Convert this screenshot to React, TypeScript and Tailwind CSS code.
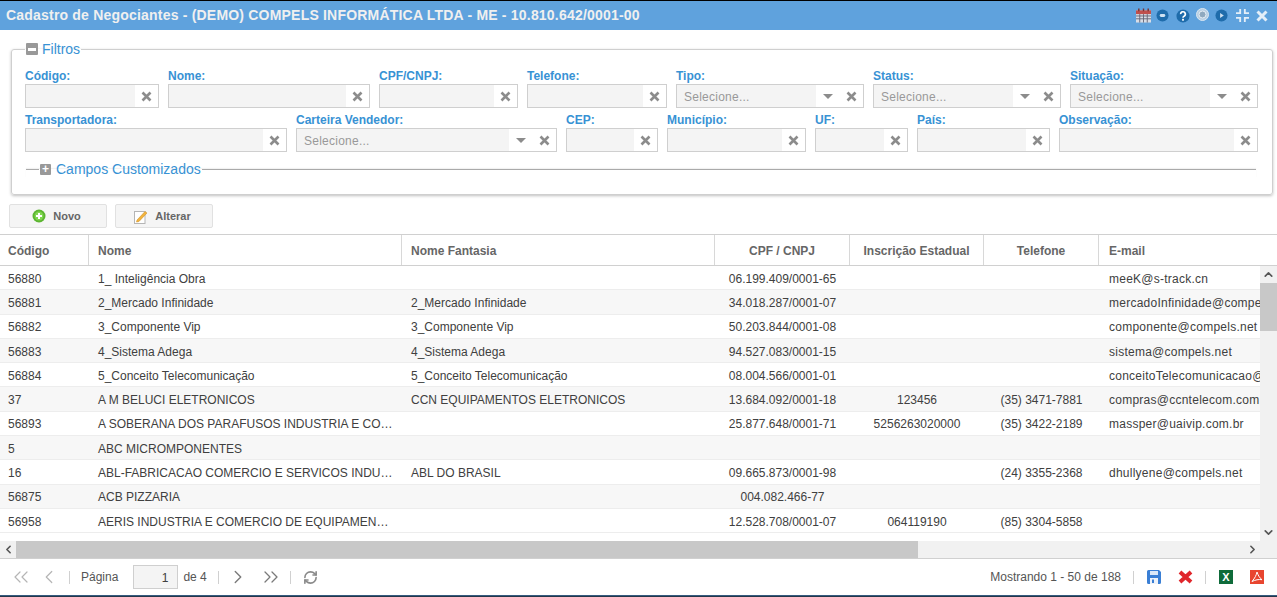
import { ChevronDown, ChevronLeft, ChevronRight, ChevronUp, ChevronsLeft, ChevronsRight, RefreshCw } from "lucide-react";

const rows = [
  ["56880", "1_ Inteligência Obra", "", "06.199.409/0001-65", "", "", "meeK@s-track.cn"],
  ["56881", "2_Mercado Infinidade", "2_Mercado Infinidade", "34.018.287/0001-07", "", "", "mercadoInfinidade@compels.net"],
  ["56882", "3_Componente Vip", "3_Componente Vip", "50.203.844/0001-08", "", "", "componente@compels.net"],
  ["56883", "4_Sistema Adega", "4_Sistema Adega", "94.527.083/0001-15", "", "", "sistema@compels.net"],
  ["56884", "5_Conceito Telecomunicação", "5_Conceito Telecomunicação", "08.004.566/0001-01", "", "", "conceitoTelecomunicacao@compels.net"],
  ["37", "A M BELUCI ELETRONICOS", "CCN EQUIPAMENTOS ELETRONICOS", "13.684.092/0001-18", "123456", "(35) 3471-7881", "compras@ccntelecom.com.br"],
  ["56893", "A SOBERANA DOS PARAFUSOS INDUSTRIA E COMERCIO LTDA", "", "25.877.648/0001-71", "5256263020000", "(35) 3422-2189", "massper@uaivip.com.br"],
  ["5", "ABC MICROMPONENTES", "", "", "", "", ""],
  ["16", "ABL-FABRICACAO COMERCIO E SERVICOS INDUSTRIAIS LTDA", "ABL DO BRASIL", "09.665.873/0001-98", "", "(24) 3355-2368", "dhullyene@compels.net"],
  ["56875", "ACB PIZZARIA", "", "004.082.466-77", "", "", ""],
  ["56958", "AERIS INDUSTRIA E COMERCIO DE EQUIPAMENTOS LTDA", "", "12.528.708/0001-07", "064119190", "(85) 3304-5858", ""],
];

const XIcon = () => (
  <svg width="11" height="11" viewBox="0 0 11 11" className="text-[#8c8c8c]">
    <path d="M1.5 1.5l8 8M9.5 1.5l-8 8" stroke="currentColor" strokeWidth="2.6" />
  </svg>
);

type FieldProps = { label: string; w: string; select?: boolean };

const Field = ({ label, w, select }: FieldProps) => (
  <div className={`${w} shrink-0`}>
    <div className="h-[16px] text-[12px] leading-[14px] font-bold text-[#3892d4]">{label}</div>
    <div className="mt-[-1px] flex h-[24px] border border-[#cfcfcf] bg-white">
      <div className="flex-1 bg-[#f4f4f4] pl-[7px] text-[12px] leading-[24px] tracking-[0.25px] text-[#999]">
        {select ? "Selecione..." : ""}
      </div>
      {select && (
        <div className="flex w-[24px] items-center justify-center">
          <div className="h-0 w-0 border-x-[5px] border-t-[5px] border-x-transparent border-t-[#8c8c8c]" />
        </div>
      )}
      <div className="flex w-[23px] items-center justify-center">
        <XIcon />
      </div>
    </div>
  </div>
);

const ToolButton = ({ label, icon }: { label: string; icon: React.ReactNode }) => (
  <button className="flex h-[24px] w-[98px] items-center justify-center gap-[7px] rounded-[2px] border border-[#e1e1e1] bg-[#f5f5f5] pr-[3px] text-[11px] font-bold text-[#666]">
    {icon}
    {label}
  </button>
);

const headCols = [
  { label: "Código", w: "w-[89px]", cls: "pl-[8px]" },
  { label: "Nome", w: "w-[313px]", cls: "pl-[9px]" },
  { label: "Nome Fantasia", w: "w-[313px]", cls: "pl-[9px]" },
  { label: "CPF / CNPJ", w: "w-[135px]", cls: "justify-center" },
  { label: "Inscrição Estadual", w: "w-[134px]", cls: "justify-center" },
  { label: "Telefone", w: "w-[115px]", cls: "justify-center" },
  { label: "E-mail", w: "flex-1", cls: "pl-[10px]" },
];

const Sep = () => <div className="h-[13px] w-px bg-[#d0d0d0]" />;

const App = () => {
  return (
    <div className="flex h-[597px] w-[1277px] flex-col overflow-hidden border-t border-black bg-white font-['Liberation_Sans',sans-serif] text-[12px] text-[#404040]">
      <div className="flex h-[29px] shrink-0 items-center justify-between bg-[#5fa2dd] pl-[6px] pr-[9px]">
        <div className="text-[14px] font-bold tracking-[0.2px] text-[#f0f0f0]">
          Cadastro de Negociantes - (DEMO) COMPELS INFORMÁTICA LTDA - ME - 10.810.642/0001-00
        </div>
        <div className="flex items-center">
          <svg width="15" height="15" viewBox="0 0 16 15">
            <rect y="2" width="16" height="13" fill="#d8dde6" />
            <rect y="2" width="16" height="4" fill="#c0504d" />
            <path d="M3 0v3M8 0v3M13 0v3" stroke="#7a3030" strokeWidth="1.5" />
            <path d="M0 8h16M0 11h16M4 6v9M8 6v9M12 6v9" stroke="#667" strokeWidth="1" />
          </svg>
          <svg width="13" height="13" viewBox="0 0 14 14" className="ml-[5px]">
            <circle cx="7" cy="7" r="6.5" fill="#1f6cab" />
            <rect x="4" y="5.5" width="6" height="3" rx="1.5" fill="#cfe2f2" />
          </svg>
          <svg width="14" height="14" viewBox="0 0 15 15" className="ml-[7px]">
            <circle cx="7.5" cy="7.5" r="7" fill="#1f6cab" />
            <path d="M5 5.5a2.5 2.5 0 1 1 3.6 2.2c-.8.4-1.1.8-1.1 1.6" fill="none" stroke="#fff" strokeWidth="1.8" />
            <rect x="6.5" y="10.5" width="2" height="2" fill="#fff" />
          </svg>
          <svg width="13" height="13" viewBox="0 0 13 13" className="mb-[2px] ml-[6px]">
            <circle cx="6.5" cy="6.5" r="6" fill="#b9cfe2" stroke="#dbe7f1" />
            <circle cx="6.5" cy="6.5" r="3.5" fill="#8fa9bf" stroke="#e6eef5" />
          </svg>
          <svg width="13" height="13" viewBox="0 0 14 14" className="ml-[6px]">
            <circle cx="7" cy="7" r="6.5" fill="#1f6cab" />
            <path d="M5.5 4.2l4 2.8-4 2.8z" fill="#cfe2f2" />
          </svg>
          <svg width="13" height="13" viewBox="0 0 14 14" className="ml-[8px] text-[#e4eef8]">
            <path d="M4.5 0v4.500H0M9.500 0v4.500H14M4.500 14V9.500H0M9.500 14V9.500H14" fill="none" stroke="currentColor" strokeWidth="2" />
          </svg>
          <svg width="12" height="12" viewBox="0 0 12 12" className="ml-[7px] text-[#e4eef8]">
            <path d="M1.5 1.5l9 9M10.5 1.5l-9 9" stroke="currentColor" strokeWidth="3" />
          </svg>
        </div>
      </div>

      <div className="shrink-0 px-[11px] pt-[9px]">
        <fieldset className="h-[156px] w-[1262px] rounded-[3px] border border-[#cfcfcf] px-[13px] pb-0 shadow-[0_1px_3px_rgba(0,0,0,0.25)]">
          <legend className="flex h-[20px] items-center gap-[4px] px-[1px] text-[14px] text-[#3892d4]">
            <span className="flex h-[12px] w-[12px] items-center justify-center rounded-[1px] bg-[#999]">
              <span className="h-[3px] w-[8px] bg-white" />
            </span>
            Filtros
          </legend>
          <div className="mt-[10px] flex gap-[9px]">
            <Field label="Código:" w="w-[134px]" />
            <Field label="Nome:" w="w-[202px]" />
            <Field label="CPF/CNPJ:" w="w-[139px]" />
            <Field label="Telefone:" w="w-[140px]" />
            <Field label="Tipo:" w="w-[188px]" select />
            <Field label="Status:" w="w-[188px]" select />
            <Field label="Situação:" w="w-[188px]" select />
          </div>
          <div className="mt-[5px] flex gap-[9px]">
            <Field label="Transportadora:" w="w-[262px]" />
            <Field label="Carteira Vendedor:" w="w-[261px]" select />
            <Field label="CEP:" w="w-[92px]" />
            <Field label="Município:" w="w-[139px]" />
            <Field label="UF:" w="w-[93px]" />
            <Field label="País:" w="w-[133px]" />
            <Field label="Observação:" w="w-[199px]" />
          </div>
          <fieldset className="ml-[1px] mr-[3px] mt-[8px] h-[14px] border-t border-[#aaa] shadow-[0_-1px_1px_rgba(0,0,0,0.05)]">
            <legend className="ml-[13px] flex h-[18px] items-center gap-[5px] px-px text-[14px] text-[#3892d4]">
              <span className="flex h-[11px] w-[11px] items-center justify-center rounded-[1px] bg-[#999] text-[12px] font-bold leading-none text-white">
                +
              </span>
              Campos Customizados
            </legend>
          </fieldset>
        </fieldset>
      </div>

      <div className="flex shrink-0 gap-[8px] pl-[9px] pt-[9px]">
        <ToolButton
          label="Novo"
          icon={
            <svg width="14" height="14" viewBox="0 0 14 14">
              <circle cx="7" cy="7" r="6.5" fill="#5cb531" />
              <circle cx="7" cy="7" r="4.5" fill="#7fd64e" />
              <path d="M7 4v6M4 7h6" stroke="#fff" strokeWidth="2" />
            </svg>
          }
        />
        <ToolButton
          label="Alterar"
          icon={
            <svg width="14" height="15" viewBox="0 0 14 15">
              <rect x="0.5" y="2.500" width="10.500" height="12" fill="#fff" stroke="#b5b5b5" />
              <path d="M3 11l8-8.500 2 1.500-8 8.500-2.500.5z" fill="#f2b33d" stroke="#c98a1e" strokeWidth="0.5" />
            </svg>
          }
        />
      </div>

      <div className="mt-[6px] flex h-[32px] shrink-0 border-y border-[#d0d0d0] text-[12px] font-bold text-[#666]">
        {headCols.map((c, i) => (
          <div key={c.label} className={`flex items-center pt-[2px] ${c.w} ${c.cls} ${i < 6 ? "border-r border-[#d8d8d8]" : ""}`}>
            {c.label}
          </div>
        ))}
      </div>

      <div className="flex min-h-0 flex-1">
        <div className="min-w-0 flex-1 overflow-hidden">
          {rows.map((r, i) => (
            <div
              key={r[0]}
              className={`flex h-[24.3px] w-[1500px] items-center border-b border-[#ededed] pt-[2px] ${i % 2 === 1 ? "bg-[#f7f7f7]" : "bg-white"}`}
            >
              <div className="w-[89px] shrink-0 pl-[8px]">{r[0]}</div>
              <div className="w-[313px] shrink-0 truncate pl-[9px] pr-[7px]">{r[1]}</div>
              <div className="w-[313px] shrink-0 truncate pl-[9px] pr-[7px]">{r[2]}</div>
              <div className="w-[135px] shrink-0 text-center">{r[3]}</div>
              <div className="w-[134px] shrink-0 text-center">{r[4]}</div>
              <div className="w-[115px] shrink-0 text-center">{r[5]}</div>
              <div className="flex-1 pl-[10px] tracking-[0.25px]">{r[6]}</div>
            </div>
          ))}
        </div>
        <div className="flex w-[17px] shrink-0 flex-col bg-[#f1f1f1] text-[#555]">
          <div className="flex h-[17px] items-center justify-center">
            <ChevronUp size={13} strokeWidth={3} />
          </div>
          <div className="h-[48px] bg-[#c8c8c8]" />
          <div className="mt-auto flex h-[17px] items-center justify-center">
            <ChevronDown size={13} strokeWidth={3} />
          </div>
        </div>
      </div>

      <div className="flex h-[17px] shrink-0 items-center bg-[#f1f1f1] text-[#555]">
        <div className="flex w-[16px] items-center justify-center">
          <ChevronLeft size={13} strokeWidth={3} />
        </div>
        <div className="h-full w-[902px] bg-[#c8c8c8]" />
        <div className="ml-auto flex w-[50px] items-center justify-center">
          <ChevronRight size={13} strokeWidth={3} />
        </div>
      </div>

      <div className="flex h-[37px] shrink-0 items-center border-t border-[#d0d0d0] pl-[9px] pr-[13px] text-[12px] text-[#555]">
        <ChevronsLeft size={24} strokeWidth={1.2} className="text-[#b5b5b5]" />
        <ChevronLeft size={22} strokeWidth={1.3} className="ml-[5px] text-[#b5b5b5]" />
        <div className="ml-[9px]"><Sep /></div>
        <span className="ml-[11px]">Página</span>
        <div className="ml-[15px] h-[24px] w-[45px] border border-[#cfcfcf] bg-[#f4f4f4] pr-[9px] text-right leading-[24px] text-[#404040]">1</div>
        <span className="ml-[5px]">de 4</span>
        <div className="ml-[11px]"><Sep /></div>
        <ChevronRight size={22} strokeWidth={1.5} className="ml-[8px] text-[#7a7a7a]" />
        <ChevronsRight size={24} strokeWidth={1.3} className="ml-[10px] text-[#7a7a7a]" />
        <div className="ml-[7px]"><Sep /></div>
        <RefreshCw size={15} strokeWidth={2.6} className="ml-[12px] text-[#8a8a8a]" />

        <span className="ml-auto">Mostrando 1 - 50 de 188</span>
        <div className="ml-[12px]"><Sep /></div>
        <svg width="14" height="14" viewBox="0 0 14 14" className="ml-[13px]">
          <path d="M0 1.5A1.5 1.5 0 0 1 1.5 0H12l2 2v10.500A1.500 1.500 0 0 1 12.500 14h-11A1.500 1.500 0 0 1 0 12.500z" fill="#3a7fd5" />
          <rect x="3" y="1" width="8" height="4" fill="#dbe8f8" />
          <rect x="3" y="8" width="8" height="6" fill="#eef3fa" />
          <rect x="5" y="9.500" width="2" height="3.500" fill="#3a7fd5" />
        </svg>
        <svg width="15" height="14" viewBox="0 0 15 14" className="ml-[17px]">
          <path d="M2 2l11 10M13 2L2 12" stroke="#e0262b" strokeWidth="4" />
        </svg>
        <div className="ml-[12px]"><Sep /></div>
        <div className="ml-[13px] flex h-[14px] w-[14px] items-center justify-center bg-[#0f6b3a] text-[11px] font-bold leading-none text-white">X</div>
        <svg width="14" height="14" viewBox="0 0 14 14" className="ml-[17px]">
          <rect width="14" height="14" fill="#e8452f" />
          <path d="M7 2c-.6 3-2 6-5 9.500 3-1.500 7-2.500 10-1.800C9.500 8 8 5 7 2z" fill="none" stroke="#fff" strokeWidth="1" />
        </svg>
      </div>

      <div className="h-[2px] shrink-0 bg-gradient-to-b from-[#3f6f9c] to-[#1a2530]" />
    </div>
  );
};

export default App;
